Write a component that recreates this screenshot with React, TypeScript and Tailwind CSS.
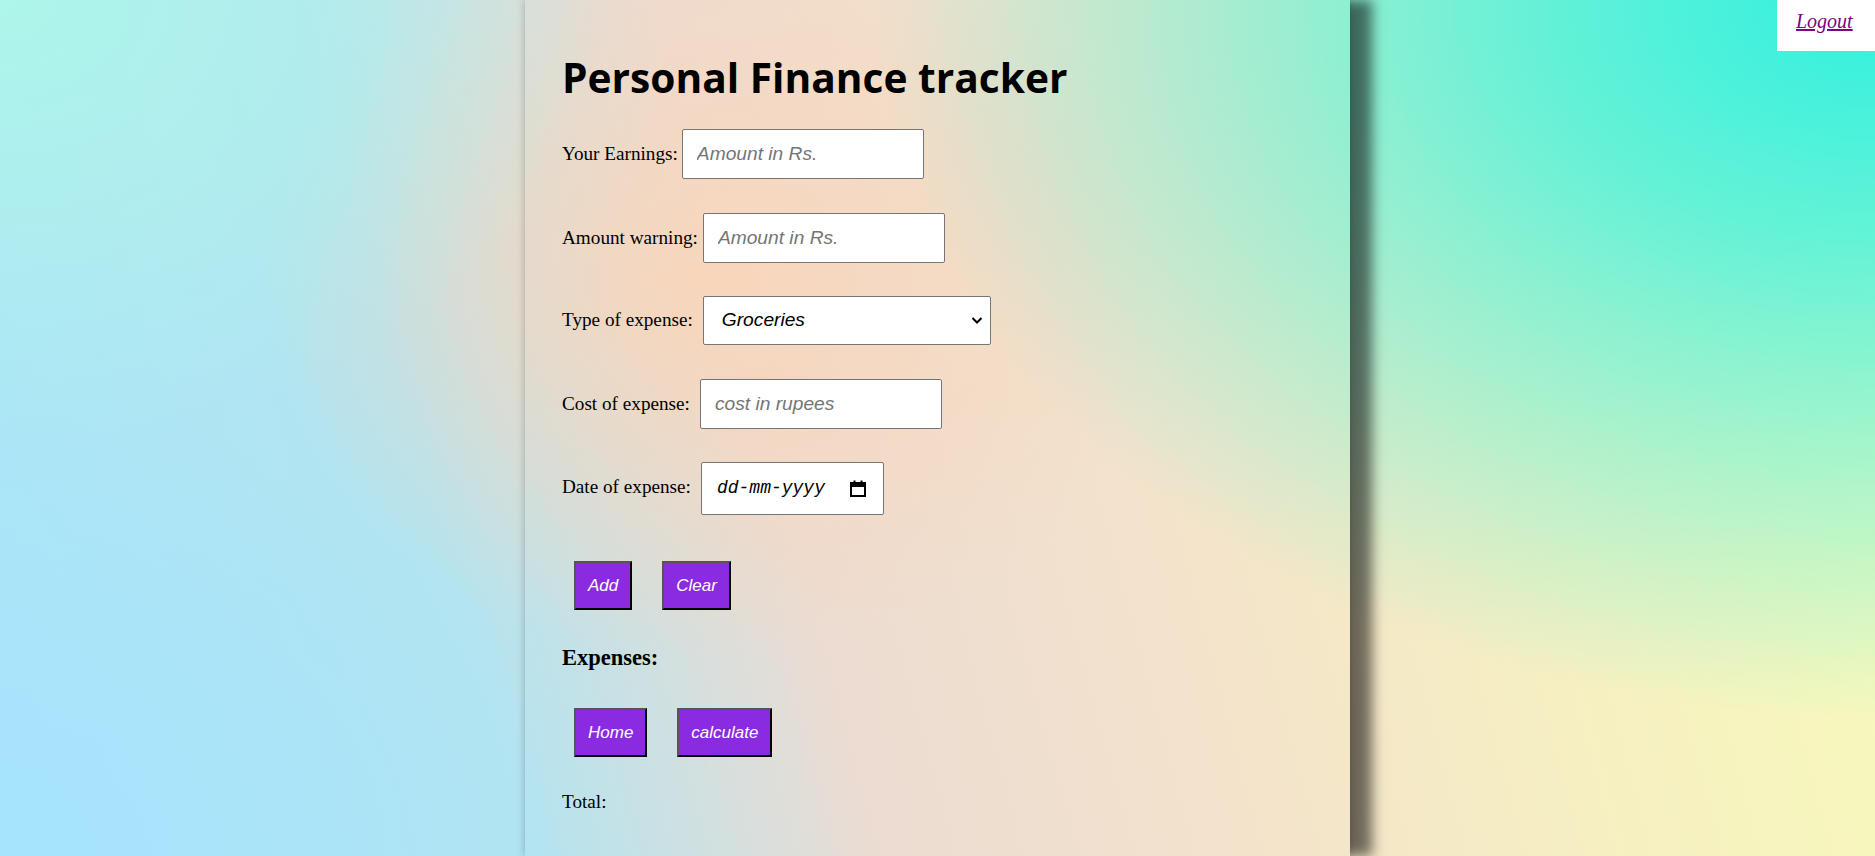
import { useState } from "react";

const serif = "font-['Liberation_Serif',serif]";
const arial = "font-['Liberation_Sans',Arial,sans-serif]";

function Field({
  label,
  placeholder,
  gap,
  value,
  onChange,
}: {
  label: string;
  placeholder: string;
  gap: string;
  value: string;
  onChange: (v: string) => void;
}) {
  return (
    <div className={`flex items-baseline ${gap}`}>
      <label className={`${serif} text-[19.2px] text-black`}>{label}</label>
      <input
        type="text"
        value={value}
        onChange={(e) => onChange(e.target.value)}
        placeholder={placeholder}
        className={`${arial} h-[50px] w-[242px] rounded-[2px] border border-[#767676] bg-white pl-[14px] text-[19.2px] italic text-black placeholder:text-[#757575] outline-none`}
      />
    </div>
  );
}

function PurpleButton({ children }: { children: string }) {
  return (
    <button
      type="button"
      className={`${arial} h-[49px] border-2 border-t-[#555] border-l-[#555] border-r-black border-b-black bg-[#8a2be2] px-[12px] text-[17px] italic text-white`}
    >
      {children}
    </button>
  );
}

export default function App() {
  const [earnings, setEarnings] = useState("");
  const [warning, setWarning] = useState("");
  const [cost, setCost] = useState("");
  const [type, setType] = useState("Groceries");

  return (
    <div className="relative h-screen w-full overflow-hidden bg-[#c8e6e0] [background-image:radial-gradient(ellipse_1000px_720px_at_100%_0%,#2ff0e0_0%,rgba(47,240,224,0.72)_35%,rgba(47,240,224,0)_100%),radial-gradient(ellipse_600px_450px_at_0%_0%,#aef5ea_0%,rgba(174,245,234,0)_100%),radial-gradient(ellipse_600px_450px_at_0%_100%,#a6e3fd_0%,rgba(166,227,253,0)_100%),radial-gradient(ellipse_450px_380px_at_38%_33%,rgba(250,213,184,0.9)_0%,rgba(250,213,184,0)_100%),linear-gradient(75deg,#a9e6f8_0%,#b3e4f0_25%,#ecdcd2_42%,#f3e2cc_58%,#f6efc2_76%,#f8fdb9_100%)]">
      <a
        href="#"
        className={`${serif} absolute top-0 right-0 h-[51px] w-[98px] bg-white pt-[9px] pl-[19px] text-[20px] leading-[24px] italic text-[#800080] underline`}
      >
        Logout
      </a>

      <div className="mx-auto flex h-full w-[825px] flex-col pt-[51px] pr-[39px] pl-[37px] shadow-[22px_0_12px_rgba(0,0,0,0.55),0_0_8px_rgba(0,0,0,0.25)]">
        <h1 className="font-['Open_Sans',sans-serif] text-[40.7px] leading-[52px] font-bold text-black">
          Personal Finance tracker
        </h1>

        <div className="mt-[26px]">
          <Field label="Your Earnings:" placeholder="Amount in Rs." gap="gap-[4px]" value={earnings} onChange={setEarnings} />
        </div>
        <div className="mt-[34px]">
          <Field label="Amount warning:" placeholder="Amount in Rs." gap="gap-[5px]" value={warning} onChange={setWarning} />
        </div>

        <div className="mt-[33px] flex items-baseline gap-[10px]">
          <label className={`${serif} text-[19.2px] text-black`}>Type of expense:</label>
          <div className="relative">
            <select
              value={type}
              onChange={(e) => setType(e.target.value)}
              className={`${arial} h-[49px] w-[288px] appearance-none rounded-[2px] border border-[#767676] bg-white pl-[18px] text-[19.2px] italic text-black outline-none`}
            >
              <option>Groceries</option>
              <option>Rent</option>
              <option>Travel</option>
              <option>Entertainment</option>
              <option>Others</option>
            </select>
            <svg
              className="pointer-events-none absolute top-[20px] right-[8px]"
              width="12"
              height="9"
              viewBox="0 0 12 9"
            >
              <path d="M1.5 2l4.5 4.5 4.5-4.5" fill="none" stroke="#000" strokeWidth="2" />
            </svg>
          </div>
        </div>

        <div className="mt-[34px]">
          <Field label="Cost of expense:" placeholder="cost in rupees" gap="gap-[10px]" value={cost} onChange={setCost} />
        </div>

        <div className="mt-[33px] flex items-baseline gap-[10px]">
          <label className={`${serif} text-[19.2px] text-black`}>Date of expense:</label>
          <div className="flex h-[53px] w-[183px] items-center justify-between rounded-[2px] border border-[#767676] bg-white pr-[17px] pl-[15px]">
            <span className="font-['Liberation_Mono',monospace] text-[18px] italic text-black">dd-mm-yyyy</span>
            <svg width="16" height="17" viewBox="0 0 16 17">
              <rect x="1" y="3" width="14" height="13" fill="none" stroke="#000" strokeWidth="2" />
              <rect x="1" y="3" width="14" height="4" fill="#000" />
              <rect x="3.5" y="0.5" width="2" height="3" fill="#000" />
              <rect x="10.5" y="0.5" width="2" height="3" fill="#000" />
            </svg>
          </div>
        </div>

        <div className="mt-[46px] flex gap-[30px] pl-[12px]">
          <PurpleButton>Add</PurpleButton>
          <PurpleButton>Clear</PurpleButton>
        </div>

        <h3 className={`${serif} mt-[35px] text-[22.5px] leading-[26px] font-bold text-black`}>Expenses:</h3>

        <div className="mt-[37px] flex gap-[30px] pl-[12px]">
          <PurpleButton>Home</PurpleButton>
          <PurpleButton>calculate</PurpleButton>
        </div>

        <p className={`${serif} mt-[34px] text-[19.2px] leading-[22px] text-black`}>Total:</p>
      </div>
    </div>
  );
}
